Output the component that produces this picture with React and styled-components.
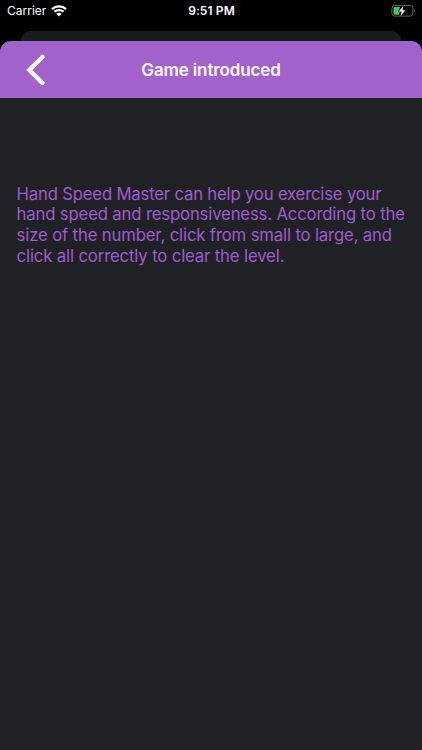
import React from 'react';
import styled, { createGlobalStyle } from 'styled-components';

const GlobalStyle = createGlobalStyle`
  * {
    box-sizing: border-box;
  }

  body {
    margin: 0;
    background: #000;
    font-family: Inter, 'Liberation Sans', sans-serif;
  }
`;

const lines = [
  { text: 'Hand Speed Master can help you exercise your', spacing: -0.18 },
  { text: 'hand speed and responsiveness. According to the', spacing: -0.15 },
  { text: 'size of the number, click from small to large, and', spacing: -0.14 },
  { text: 'click all correctly to clear the level.', spacing: -0.13 },
];

const App = () => (
  <>
    <GlobalStyle />
    <Screen>
      <StatusBar>
        <Carrier>
          <span>Carrier</span>
          <WifiIcon />
        </Carrier>
        <Time>9:51 PM</Time>
        <BatteryIcon />
      </StatusBar>
      <BackCard />
      <Sheet>
        <Header>
          <BackButton aria-label='Back'>
            <svg width='20' height='32' viewBox='0 0 20 32' fill='none'>
              <path
                d='M16.4 2.9 3.3 16 16.4 29'
                stroke='#fff'
                strokeWidth='4.3'
                strokeLinecap='round'
              />
            </svg>
          </BackButton>
          <Title>Game introduced</Title>
        </Header>
        <Intro>
          {lines.map(({ text, spacing }) => (
            <Line key={text} $spacing={spacing}>
              {text}
            </Line>
          ))}
        </Intro>
      </Sheet>
    </Screen>
  </>
);

const WifiIcon = () => (
  <svg width='16' height='12' viewBox='0 0 16 12' fill='none'>
    <path d='M1 4.1C5 .4 11 .4 15 4.1' stroke='#fff' strokeWidth='2.3' />
    <path d='M3.4 6.8C6 4.5 10 4.5 12.6 6.8' stroke='#fff' strokeWidth='2.2' />
    <path d='M5.3 8.8C6.9 7.4 9.1 7.4 10.7 8.8L8 11.5Z' fill='#fff' />
  </svg>
);

const BatteryIcon = () => (
  <svg width='26' height='14' viewBox='0 0 26 14' fill='none'>
    <rect x='1.9' y='1.5' width='21' height='10.6' rx='2.8' stroke='#626262' />
    <path
      d='M4.9 3H10.2L8.1 7.6H9.6L8.9 10.7H4.9A1.4 1.4 0 0 1 3.5 9.3V4.4A1.4 1.4 0 0 1 4.9 3Z'
      fill='#3ccb5a'
    />
    <path d='M13.4 2.1 8.7 7.6H11.7L10.5 12 15.5 6.2H12.4Z' fill='#fff' />
    <path d='M24.2 5C25.5 5.6 25.5 8 24.2 8.6Z' fill='#626262' />
  </svg>
);

const Screen = styled.div`
  display: flex;
  flex-direction: column;
  width: 422px;
  height: 750px;
  overflow: hidden;
  background: #000;
`;

const StatusBar = styled.div`
  display: grid;
  grid-template-columns: 1fr auto 1fr;
  align-items: center;
  height: 31px;
  padding: 0 6px 9px 7px;
  color: #fff;
  font-size: 12px;
  line-height: 16px;

  > svg {
    justify-self: end;
  }
`;

const Carrier = styled.div`
  display: flex;
  align-items: center;
  gap: 5px;
`;

const Time = styled.div`
  font-weight: 600;
  letter-spacing: 0.1px;
`;

const BackCard = styled.div`
  flex: none;
  height: 22px;
  margin: 0 21px -12px;
  border-radius: 9px 9px 0 0;
  background: #1a1b1e;
`;

const Sheet = styled.main`
  flex: 1;
  overflow: hidden;
  border-radius: 11px 11px 0 0;
  background: #202125;
  z-index: 1;
`;

const Header = styled.header`
  display: grid;
  grid-template-columns: 72px 1fr 72px;
  align-items: center;
  height: 57px;
  background: #a162cc;
`;

const BackButton = styled.button`
  display: flex;
  padding: 0 0 0 26px;
  border: 0;
  background: none;
`;

const Title = styled.h1`
  margin: 0;
  color: #fdf8ff;
  font-size: 17px;
  font-weight: 600;
  line-height: 22px;
  letter-spacing: -0.13px;
  text-align: center;
`;

const Intro = styled.p`
  margin: 0;
  padding: 85.5px 0 0 16.6px;
  color: #a05bce;
  font-size: 16.7px;
  line-height: 20.7px;
`;

const Line = styled.span`
  display: block;
  white-space: nowrap;
  letter-spacing: ${({ $spacing }) => $spacing}px;
`;

export default App;
